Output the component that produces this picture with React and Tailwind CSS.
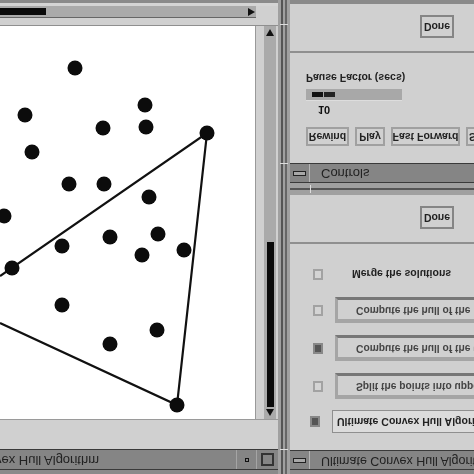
import React from "react";

const dots = [
  [75, 68], [145, 105], [25, 115], [103, 128], [146, 127], [207, 133], [32, 152],
  [69, 184], [104, 184], [149, 197], [4, 216], [158, 234], [110, 237], [62, 246],
  [142, 255], [184, 250], [12, 268], [62, 305], [157, 330], [110, 344], [177, 405],
];

// the whole screenshot is mirrored top to bottom, so text gets flipped too
const Flip = ({ className = "", children }) => (
  <span className={`block shrink-0 -scale-y-100 whitespace-nowrap ${className}`}>{children}</span>
);

const PushButton = ({ label, className = "" }) => (
  <div className={`flex items-center border-2 bg-[#d0d0d0] ${className}`}>
    <Flip className="text-[10.5px] leading-[12px] font-bold text-[#222]">{label}</Flip>
  </div>
);

const DoneButton = () => (
  <div className="flex justify-end h-[49px] pt-[11px] pr-[20px] border-b-2 border-[#8f8f8f]">
    <PushButton label="Done" className="w-[34px] h-[23px] justify-center border-[#858585]" />
  </div>
);

const TitleBar = ({ title, textClass }) => (
  <div className="flex items-center shrink-0 h-[20px] bg-[#858585] border-y border-[#3a3a3a]">
    <div className="w-[20px] shrink-0 h-full flex items-center justify-center border-r border-[#b5b5b5]">
      <div className="w-[13px] h-[5px] border border-[#222] bg-[#a8a8a8]"></div>
    </div>
    <Flip className={`ml-[11px] text-[#222] ${textClass}`}>{title}</Flip>
  </div>
);

const Check = ({ on }) => (
  <div className={`w-[10px] h-[11px] border-2 ${on ? "bg-[#555] border-[#888]" : "bg-[#d4d4d4] border-[#a2a2a2]"}`}></div>
);

const OptionRow = ({ label, on }) => (
  <div className="flex items-center h-[26px] mb-[12px]">
    <div className="w-[45px] shrink-0 pl-[23px]"><Check on={on} /></div>
    <div className="flex-1 min-w-0 h-full flex items-center pl-[18px] border-t-[3px] border-l-[3px] border-b-[4px] border-t-[#777] border-l-[#a5a5a5] border-b-[#a5a5a5] bg-[#d0d0d0]">
      <Flip className="text-[10.25px] leading-[12px] font-bold text-[#444]">{label}</Flip>
    </div>
  </div>
);

const Controls = () => (
  <div className="h-[183px] shrink-0 flex flex-col bg-[#8a8a8a]">
    <div className="h-[159px] mt-[4px] bg-[#d0d0d0]">
      <DoneButton />
      <div className="pl-[16px] pt-[19px]">
        <Flip className="text-[10.5px] leading-[12px] font-bold text-[#222]">Pause Factor (secs)</Flip>
        <div className="w-[96px] h-[12px] mt-[5px] flex items-center pl-[6px] gap-[1px] bg-[#a8a8a8] border-b border-[#ddd]">
          <div className="w-[11px] h-[5px] bg-[#111]"></div>
          <div className="w-[11px] h-[5px] bg-[#222]"></div>
        </div>
        <Flip className="ml-[12px] mt-[3px] text-[11px] leading-[12px] font-bold text-[#111]">10</Flip>
        <div className="flex gap-[6px] mt-[11px] overflow-hidden">
          <PushButton label="Rewind" className="w-[43px] h-[19px] shrink-0 justify-center border-[#a0a0a0]" />
          <PushButton label="Play" className="w-[30px] h-[19px] shrink-0 justify-center border-[#a0a0a0]" />
          <PushButton label="Fast Forward" className="w-[69px] h-[19px] shrink-0 justify-center border-[#a0a0a0]" />
          <PushButton label="Step" className="w-[40px] h-[19px] shrink-0 pl-[1px] border-[#a0a0a0]" />
        </div>
      </div>
    </div>
    <TitleBar title="Controls" textClass="text-[13px]" />
  </div>
);

const Hull = () => (
  <div className="h-[275px] shrink-0 flex flex-col bg-[#d0d0d0]">
    <div className="flex-1 min-h-0">
      <DoneButton />
      <div className="flex items-center h-[20px] mt-[20px]">
        <div className="w-[45px] shrink-0 pl-[23px]"><Check /></div>
        <Flip className="ml-[17px] text-[10.5px] leading-[12px] font-bold text-[#222]">Merge the solutions</Flip>
      </div>
      <div className="mt-[13px] overflow-hidden">
        <OptionRow label="Compute the hull of the lower points" />
        <OptionRow label="Compute the hull of the upper points" on />
        <OptionRow label="Split the points into upper and lower" />
        <div className="flex items-center h-[23px] -mt-[1px]">
          <div className="w-[42px] shrink-0 pl-[20px]"><Check on /></div>
          <div className="flex-1 min-w-0 h-full flex items-center pl-[4px] border border-[#8f8f8f] border-r-0 bg-[#dcdcdc]">
            <Flip className="text-[10.5px] leading-[12px] font-bold text-[#222]">Ultimate Convex Hull Algorithm</Flip>
          </div>
        </div>
      </div>
    </div>
    <TitleBar title="Ultimate Convex Hull Algorithm" textClass="text-[12.5px]" />
  </div>
);

const Plot = () => (
  <svg viewBox="0 26 255 393" className="w-[255px] h-[393px] shrink-0 bg-white block">
    <path d="M0 276 L207 133 L177 405 L0 323" fill="none" stroke="#111" strokeWidth="2.2" />
    {dots.map(([x, y], i) => (
      <circle key={i} cx={x} cy={y} r="7.5" fill="#0c0c0c" />
    ))}
  </svg>
);

export default function App() {
  return (
    <div className="w-[474px] h-[474px] flex overflow-hidden bg-[#8e8e8e] font-['Liberation_Sans',sans-serif] blur-[0.5px]">
      {/* left window */}
      <div className="w-[278px] shrink-0 flex flex-col">
        <div className="h-[3px] bg-[#8a8a8a]"></div>
        <div className="h-[3px] bg-[#d4d4d4]"></div>
        <div className="flex h-[12px] bg-[#d0d0d0]">
          <div className="w-[256px] flex items-center justify-between pr-[1px] bg-[#aaaaaa] border-b border-[#666]">
            <div className="w-[46px] h-[7px] bg-[#0a0a0a]"></div>
            <div className="w-0 h-0 border-y-[4px] border-y-transparent border-l-[7px] border-l-[#111]"></div>
          </div>
        </div>
        <div className="h-[8px] bg-[#d0d0d0] border-b border-[#8f8f8f]"></div>
        <div className="flex bg-[#d0d0d0]">
          <Plot />
          <div className="w-[1px] bg-[#999]"></div>
          <div className="ml-[8px] w-[12px] h-[393px] flex flex-col items-center justify-between py-[3px] bg-[#aaaaaa]">
            <div className="w-0 h-0 border-x-[4px] border-x-transparent border-b-[7px] border-b-[#111]"></div>
            <div className="flex-1 flex items-end pb-[2px]">
              <div className="w-[7px] h-[165px] bg-[#0a0a0a]"></div>
            </div>
            <div className="w-0 h-0 border-x-[4px] border-x-transparent border-t-[7px] border-t-[#111]"></div>
          </div>
        </div>
        <div className="h-[30px] bg-[#d0d0d0] border-t border-[#9a9a9a]"></div>
        <div className="flex items-center h-[21px] bg-[#858585] border-y border-[#3a3a3a]">
          <div className="w-[236px] shrink-0 flex justify-end overflow-hidden">
            <Flip className="mr-[137px] text-[13px] text-[#222]">Ultimate Convex Hull Algorithm</Flip>
          </div>
          <div className="w-[21px] h-full flex items-center justify-center border-x border-[#a5a5a5]">
            <div className="w-[4px] h-[4px] border border-[#111]"></div>
          </div>
          <div className="w-[20px] h-full flex items-center justify-center">
            <div className="w-[13px] h-[13px] border-2 border-[#333]"></div>
          </div>
        </div>
        <div className="flex-1 bg-[#8a8a8a]"></div>
      </div>

      {/* window frame between the two columns, ticks are the resize handles */}
      <div className="relative w-[12px] shrink-0 flex justify-center gap-[2px] bg-[#a0a0a0]">
        <div className="w-[2px] bg-[#555]"></div>
        <div className="w-[2px] bg-[#666]"></div>
        <div className="absolute left-[2px] top-[24px] w-[8px] h-px bg-[#ddd]"></div>
        <div className="absolute left-[2px] top-[163px] w-[8px] h-px bg-[#ddd]"></div>
        <div className="absolute left-[2px] top-[449px] w-[8px] h-px bg-[#ddd]"></div>
      </div>

      {/* right windows */}
      <div className="flex-1 min-w-0 flex flex-col overflow-hidden">
        <Controls />
        <div className="relative h-[12px] shrink-0 flex flex-col justify-center bg-[#a0a0a0]">
          <div className="h-[2px] bg-[#555]"></div>
          <div className="absolute left-[20px] top-[2px] w-px h-[8px] bg-[#ddd]"></div>
        </div>
        <Hull />
        <div className="flex-1 bg-[#8a8a8a]"></div>
      </div>
    </div>
  );
}
